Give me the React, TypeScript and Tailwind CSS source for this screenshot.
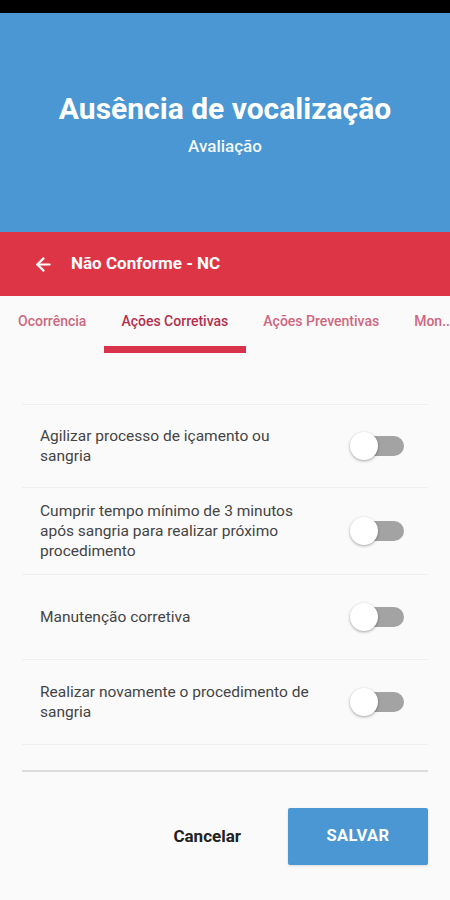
import { ArrowLeft } from 'lucide-react';

const tabs = [
    { label: 'Ocorrência', active: false },
    { label: 'Ações Corretivas', active: true },
    { label: 'Ações Preventivas', active: false },
    { label: 'Mon..', active: false },
];

const actions = [
    { text: 'Agilizar processo de içamento ou sangria', h: 'h-[83px]' },
    { text: 'Cumprir tempo mínimo de 3 minutos após sangria para realizar próximo procedimento', h: 'h-[87px]' },
    { text: 'Manutenção corretiva', h: 'h-[85px]' },
    { text: 'Realizar novamente o procedimento de sangria', h: 'h-[85px]' },
];

function Toggle() {
    return (
        <div className="relative w-[56px] h-[28px] shrink-0 flex items-center">
            <div className="absolute right-[2px] w-[40px] h-[20px] rounded-full bg-[#a3a3a3]"></div>
            <div className="absolute left-0 w-[28px] h-[28px] rounded-full bg-white shadow-[0_1px_3px_rgba(0,0,0,0.35)]"></div>
        </div>
    );
}

export default function App() {
    return (
        <div className="w-[450px] h-[900px] bg-[#fafafa] flex flex-col font-['Roboto',sans-serif] overflow-hidden">
            <div className="h-[13px] bg-black"></div>

            {/* Header */}
            <div className="h-[219px] bg-[#4b97d3] flex flex-col items-center pt-[78px]">
                <h1 className="text-[30px] font-bold text-white leading-[36px]">Ausência de vocalização</h1>
                <p className="text-[17px] font-medium text-white/95 mt-[9px] leading-[20px]">Avaliação</p>
            </div>

            {/* Toolbar */}
            <div className="h-[64px] bg-[#dd3545] flex items-center pl-[33px] gap-[17px]">
                <ArrowLeft size={21} color="white" strokeWidth={2.5} />
                <span className="text-[17px] font-bold text-white">Não Conforme - NC</span>
            </div>

            {/* Tabs */}
            <div className="flex h-[60px] pl-[18px] gap-[35px] whitespace-nowrap">
                {tabs.map((t) => (
                    <div key={t.label} className="relative flex flex-col items-center pt-[16px]">
                        <span className={`text-[14px] font-medium leading-[18px] ${t.active ? 'text-[#b3304d]' : 'text-[#cd6880]'}`}>{t.label}</span>
                        {t.active && <div className="absolute top-[50px] left-[-17px] right-[-18px] h-[7px] bg-[#d8334a]"></div>}
                    </div>
                ))}
            </div>

            {/* Actions list */}
            <div className="mx-[22px] mt-[48px] border-t border-[#efefef]">
                {actions.map((a) => (
                    <div key={a.text} className={`${a.h} flex items-center justify-between pl-[18px] pr-[22px] border-b border-[#efefef]`}>
                        <p className="w-[282px] text-[15.5px] leading-[20px] text-[#444]">{a.text}</p>
                        <Toggle />
                    </div>
                ))}
            </div>

            <div className="mx-[22px] mt-[25px] h-[2px] bg-[#dcdcdc]"></div>

            {/* Footer buttons */}
            <div className="flex items-center justify-end mt-[36px] mr-[22px] gap-[47px]">
                <button className="text-[17px] font-bold text-[#222]">Cancelar</button>
                <button className="w-[140px] h-[57px] rounded-[2px] bg-[#4b97d3] text-white text-[16.5px] font-bold tracking-wide shadow-sm">SALVAR</button>
            </div>
        </div>
    );
}
